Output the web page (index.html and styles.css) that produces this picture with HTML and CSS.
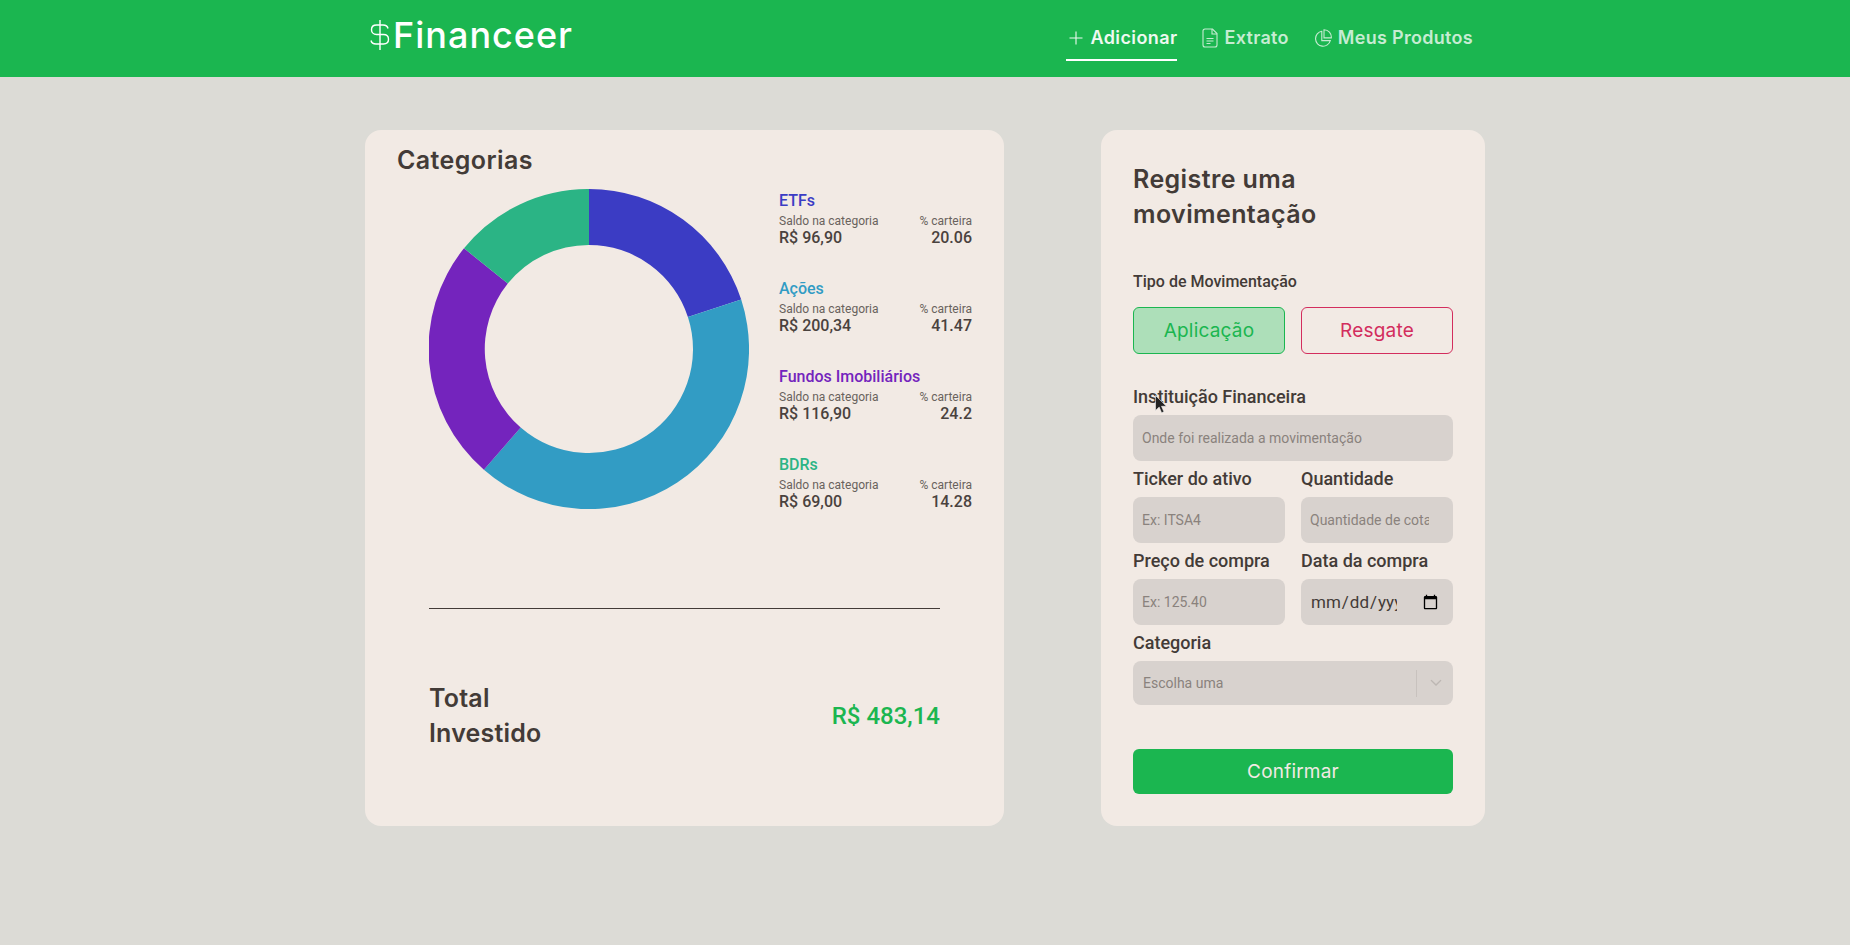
FILE: index.html
```html
<!DOCTYPE html>
<html lang="pt-BR">
	<head>
		<meta charset="UTF-8">
		<title>Financeer</title>
		<link rel="stylesheet" href="styles.css">
	</head>
	<body>
		<header class="topbar">
			<div class="topbar_inner">
				<a href="javascript:;" class="logo">
					<svg class="logo_icon" viewBox="0 0 20 32" width="20" height="32" fill="none" stroke="#fff" stroke-width="1.4">
						<path d="M10 1v30"/>
						<path d="M18 9.500c-.5-2.700-2.700-3.500-5-3.500H6.500C3.500 6 1.500 8 1.500 10.700s2 4.800 5 4.800h7c3 0 5 2 5 4.800S16.500 25 13.500 25H6c-2.500 0-4.500-1-5-3.500"/>
					</svg>
					<span>Financeer</span>
				</a>
				<nav class="nav">
					<a href="javascript:;" class="nav_item active">
						<svg viewBox="0 0 18 16" width="18" height="16" fill="none" stroke="currentColor" stroke-width="1.100"><path d="M10 1.500v13M3.500 8h13"/></svg>
						<span>Adicionar</span>
					</a>
					<a href="javascript:;" class="nav_item">
						<svg viewBox="0 0 16 20" width="16" height="20" fill="none" stroke="currentColor" stroke-width="1.100"><path d="M3 1h7.500L15 5.500V17a2 2 0 0 1-2 2H3a2 2 0 0 1-2-2V3a2 2 0 0 1 2-2z"/><path d="M10 1v5h5M4.500 10.500h7M4.500 13h7M4.500 15.500h4"/></svg>
						<span>Extrato</span>
					</a>
					<a href="javascript:;" class="nav_item">
						<svg viewBox="0 0 18 18" width="18" height="18" fill="none" stroke="currentColor" stroke-width="1.100"><path d="M7.800 2.300a7.500 7.500 0 1 0 8.500 9.300H7.800z"/><path d="M10 .7a7.500 7.500 0 0 1 7.300 8.200H10z"/></svg>
						<span>Meus Produtos</span>
					</a>
				</nav>
			</div>
		</header>

		<main class="content">
			<section class="card card_left">
				<h2 class="card_title title_cat">Categorias</h2>
				<div class="chart_row">
					<svg class="donut" viewBox="0 0 320 320" width="320" height="320">
						<path d="M160 0A160 160 0 0 1 312.200 110.600L258.900 127.900A104 104 0 0 0 160 56Z" fill="#3b3cc4"/>
						<path d="M312.200 110.600A160 160 0 0 1 54.900 280.700L91.700 238.500A104 104 0 0 0 258.900 127.900Z" fill="#329cc4"/>
						<path d="M54.900 280.700A160 160 0 0 1 35 59.300L78.800 94.600A104 104 0 0 0 91.700 238.500Z" fill="#7424bd"/>
						<path d="M35 59.300A160 160 0 0 1 160 0V56A104 104 0 0 0 78.800 94.600Z" fill="#2bb485"/>
					</svg>
					<ul class="legend">
						<li class="legend_item">
							<h3 class="legend_name c_etf">ETFs</h3>
							<div class="legend_line"><span>Saldo na categoria</span><span>% carteira</span></div>
							<div class="legend_value"><span>R$ 96,90</span><span>20.06</span></div>
						</li>
						<li class="legend_item">
							<h3 class="legend_name c_acoes">Ações</h3>
							<div class="legend_line"><span>Saldo na categoria</span><span>% carteira</span></div>
							<div class="legend_value"><span>R$ 200,34</span><span>41.47</span></div>
						</li>
						<li class="legend_item">
							<h3 class="legend_name c_fundos">Fundos Imobiliários</h3>
							<div class="legend_line"><span>Saldo na categoria</span><span>% carteira</span></div>
							<div class="legend_value"><span>R$ 116,90</span><span>24.2</span></div>
						</li>
						<li class="legend_item">
							<h3 class="legend_name c_bdr">BDRs</h3>
							<div class="legend_line"><span>Saldo na categoria</span><span>% carteira</span></div>
							<div class="legend_value"><span>R$ 69,00</span><span>14.28</span></div>
						</li>
					</ul>
				</div>
				<div class="total">
					<div class="total_label">Total<br>Investido</div>
					<div class="total_value">R$ 483,14</div>
				</div>
			</section>

			<section class="card card_right">
				<h2 class="card_title title_form">Registre uma movimentação</h2>
				<p class="type_label">Tipo de Movimentação</p>
				<div class="type_row">
					<button class="type_btn apply">Aplicação</button>
					<button class="type_btn redeem">Resgate</button>
				</div>
				<div class="field field_first">
					<label>Instituição Financeira</label>
					<input type="text" placeholder="Onde foi realizada a movimentação">
				</div>
				<div class="field_row">
					<div class="field">
						<label>Ticker do ativo</label>
						<input type="text" placeholder="Ex: ITSA4">
					</div>
					<div class="field">
						<label>Quantidade</label>
						<input type="text" class="input_cut" placeholder="Quantidade de cotas">
					</div>
				</div>
				<div class="field_row">
					<div class="field">
						<label>Preço de compra</label>
						<input type="text" placeholder="Ex: 125.40">
					</div>
					<div class="field">
						<label>Data da compra</label>
						<input type="date">
					</div>
				</div>
				<div class="field">
					<label>Categoria</label>
					<div class="select">
						<span class="select_text">Escolha uma</span>
						<span class="select_sep"></span>
						<svg class="select_arrow" viewBox="0 0 20 20" width="20" height="20" fill="#bdb7b3"><path d="M4.500 7.500 10 13l5.500-5.500-1-.7L10 11 5.500 6.800z"/></svg>
					</div>
				</div>
				<button class="confirm">Confirmar</button>
			</section>
		</main>

		<svg class="cursor" viewBox="0 0 12 19" width="12" height="19"><path d="M.5.500v15l3.700-3.400 2.400 5.700 2.300-1-2.400-5.500h4.900z" fill="#222" stroke="#eee" stroke-width=".6"/></svg>
	</body>
</html>
```

FILE: styles.css
```css
*{
	padding: 0;
	margin: 0;
	box-sizing: border-box;
}
li{
	list-style: none;
}
a{
	text-decoration: none;
}
body{
	background: #dcdbd6;
	min-height: 945px;
	font-family: "Roboto", "Liberation Sans", sans-serif;
	color: #433b37;
	overflow: hidden;
}
.topbar{
	height: 77px;
	background: #1bb650;
}
.topbar_inner{
	width: 1120px;
	height: 77px;
	margin: 0 auto;
	display: flex;
	justify-content: space-between;
	padding: 0 12px 0 5px;
}
.logo{
	display: flex;
	align-items: center;
	gap: 3px;
	height: 69px;
	color: #fff;
	font-family: "Inter", "Liberation Sans", sans-serif;
	font-size: 36px;
	font-weight: 500;
	letter-spacing: 1px;
}
.nav{
	display: flex;
	gap: 25px;
}
.nav_item{
	display: flex;
	align-items: center;
	gap: 6px;
	height: 61px;
	padding-top: 16px;
	font-family: "Inter", "Liberation Sans", sans-serif;
	font-size: 18px;
	font-weight: 600;
	letter-spacing: .3px;
	color: #c6ecd2;
	border-bottom: 2px solid transparent;
}
.nav_item.active{
	color: #eef9f1;
	letter-spacing: .4px;
	border-bottom-color: #fff;
}
.content{
	width: 1120px;
	margin: 53px auto 0;
	display: grid;
	grid-template-columns: 639px 384px;
	gap: 97px;
}
.card{
	height: 696px;
	background: #f2eae4;
	border-radius: 16px;
}
.card_left{
	padding: 13px 32px;
}
.card_right{
	padding: 32px;
}
.card_title{
	font-family: "Inter", "Liberation Sans", sans-serif;
	font-size: 25px;
	font-weight: 600;
	letter-spacing: .4px;
	line-height: 35px;
	color: #433b37;
}
.chart_row{
	display: flex;
	gap: 30px;
	padding-left: 32px;
	margin-top: 11px;
}
.donut{
	flex: none;
}
.legend{
	flex: 1;
	display: flex;
	flex-direction: column;
	gap: 32px;
	padding-top: 2px;
}
.legend_name{
	font-size: 16px;
	font-weight: 500;
	line-height: 19px;
}
.c_etf{ color: #3b3cc4; }
.c_acoes{ color: #329cc4; }
.c_fundos{ color: #7424bd; }
.c_bdr{ color: #2bb485; }
.legend_line,.legend_value{
	display: flex;
	justify-content: space-between;
}
.legend_line{
	margin-top: 3px;
	font-size: 12px;
	line-height: 16px;
	color: #69625d;
}
.legend_value{
	font-size: 16px;
	font-weight: 500;
	line-height: 18px;
	color: #4a423e;
}
.total{
	margin: 97px 32px 0;
	padding-top: 72px;
	border-top: 1px solid #433b37;
	display: flex;
	justify-content: space-between;
	align-items: center;
}
.total_label{
	font-family: "Inter", "Liberation Sans", sans-serif;
	font-size: 25px;
	font-weight: 600;
	letter-spacing: .2px;
	line-height: 35px;
}
.total_value{
	font-size: 24px;
	font-weight: 500;
	color: #1bb650;
}
.type_label{
	margin-top: 40px;
	font-size: 16px;
	font-weight: 500;
	line-height: 20px;
}
.type_row,.field_row{
	display: grid;
	grid-template-columns: 152px 152px;
	gap: 16px;
}
.type_row{
	margin-top: 15px;
}
.type_btn{
	height: 47px;
	border-radius: 6px;
	font-family: "Inter", "Liberation Sans", sans-serif;
	font-size: 19px;
	letter-spacing: .2px;
	background: transparent;
}
.apply{
	color: #1bb650;
	background: #addfb9;
	border: 1px solid #1bb650;
}
.redeem{
	color: #d32d5d;
	border: 1px solid #d32d5d;
}
.field_first{
	margin-top: 25px;
}
.field label{
	display: block;
	font-size: 18px;
	font-weight: 500;
	line-height: 36px;
}
.field input{
	display: block;
	width: 100%;
	height: 46px;
	padding: 0 9px;
	border: 0;
	border-radius: 8px;
	background: #d8d2ce;
	font-family: "Roboto", sans-serif;
	font-size: 14px;
	color: #433b37;
}
.field input::placeholder{
	color: #8a827d;
}
.field .input_cut{
	padding-right: 24px;
}
.field input[type=date]{
	font-size: 17px;
	padding-right: 12px;
}
.field input[type=date]::-webkit-calendar-picker-indicator{
	margin-left: 23px;
}
.field_row .field{
	min-width: 0;
}
.select{
	height: 44px;
	display: flex;
	align-items: center;
	padding: 0 7px 0 10px;
	border-radius: 8px;
	background: #d8d2ce;
	font-size: 14px;
	color: #8a827d;
}
.select_text{
	flex: 1;
}
.select_sep{
	width: 1px;
	height: 27px;
	background: #c8c2be;
	margin-right: 9px;
}
.confirm{
	display: block;
	width: 100%;
	height: 45px;
	margin-top: 44px;
	border: 0;
	border-radius: 6px;
	background: #1bb650;
	color: #f2eae4;
	font-family: "Inter", "Liberation Sans", sans-serif;
	font-size: 19px;
	letter-spacing: .2px;
}
.cursor{
	position: absolute;
	left: 1155px;
	top: 395px;
}
```
